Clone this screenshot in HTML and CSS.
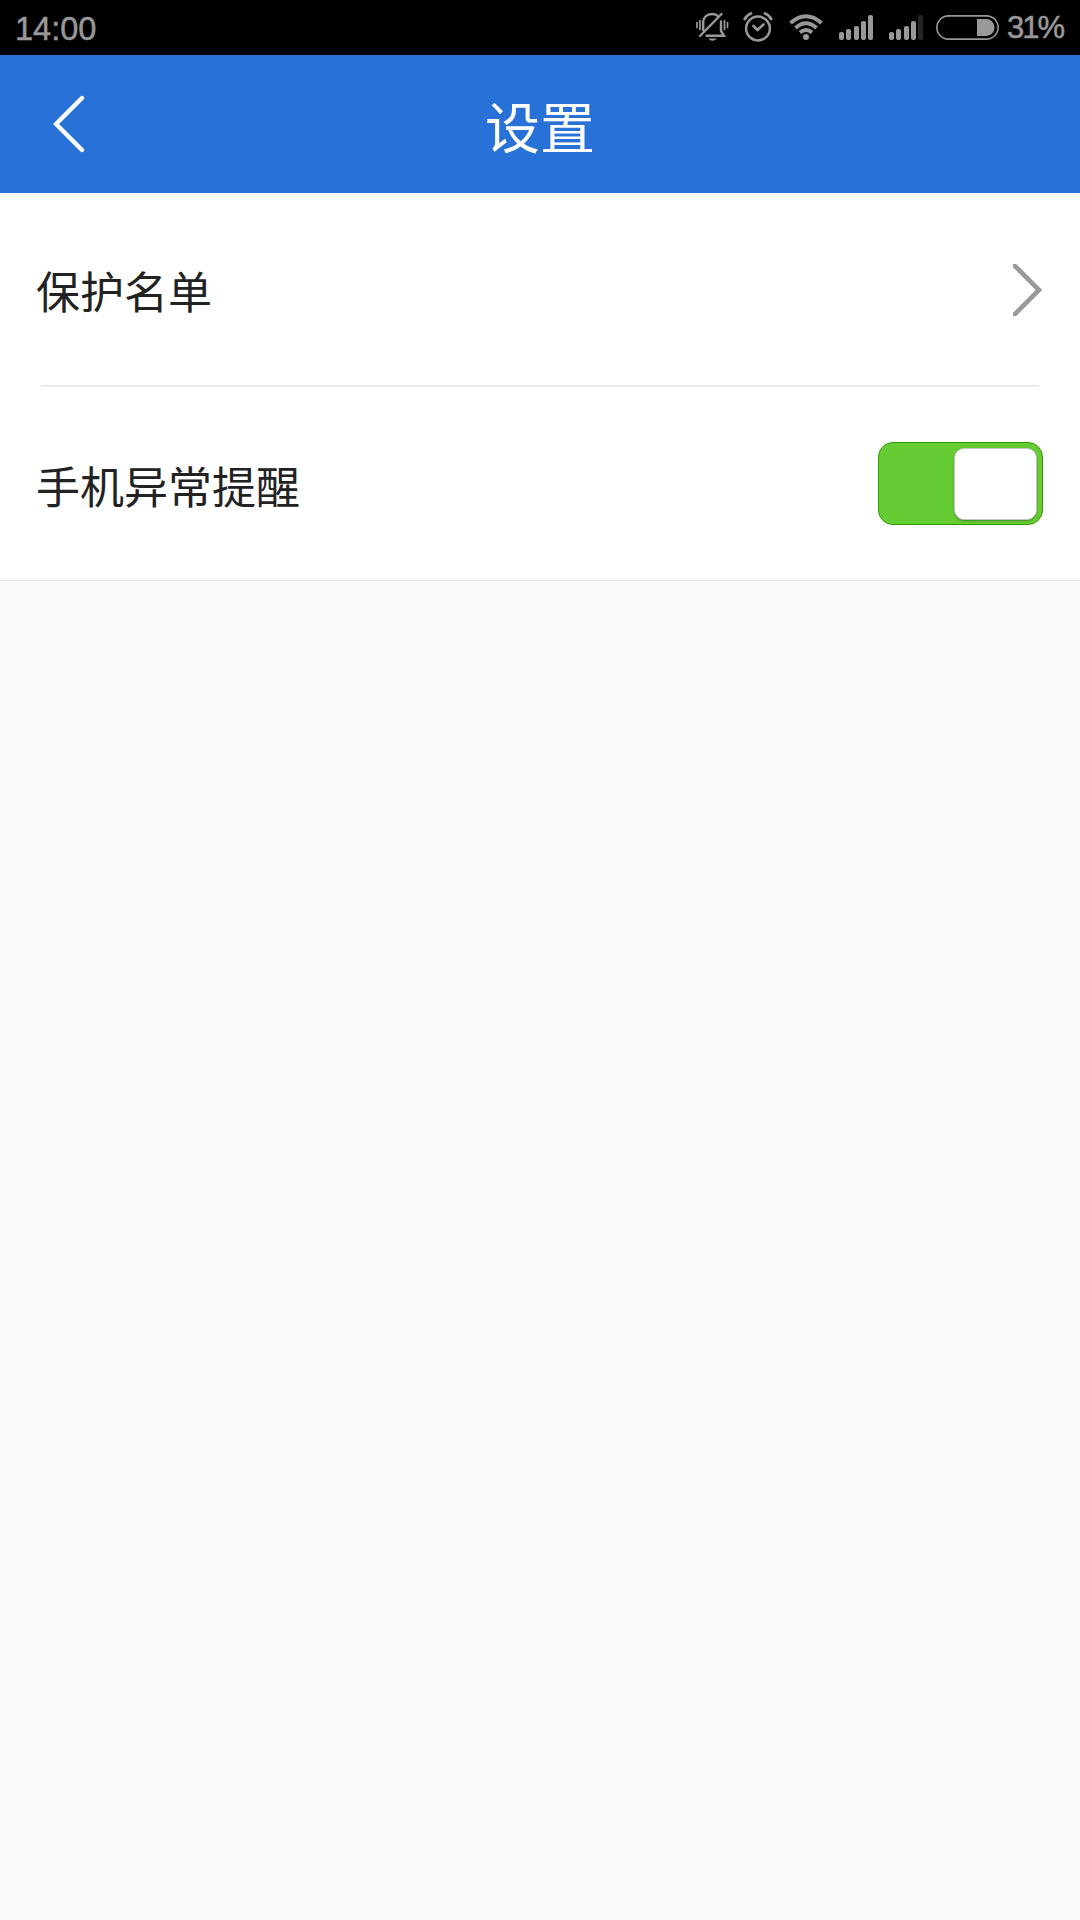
FILE: index.html
```
<!DOCTYPE html>
<html lang="zh-CN">
<head>
  <meta charset="UTF-8">
  <title>设置</title>
  <link rel="stylesheet" href="styles.css">
</head>
<body>
  <div class="statusbar">
    <span class="time">14:00</span>

    <div class="status-icons">
      <!-- muted bell -->
      <svg class="icon-bell" width="34" height="32" viewBox="0 0 34 32" fill="none" stroke="#999" stroke-width="2.400" stroke-linecap="round">
        <path d="M7.200 19V12C7.200 6 11 3 16 3C18 3 20 3.500 21.500 4.700"/>
        <path d="M25 10.500V20L28 24.800H10.500"/>
        <path d="M4 25L25.500 3"/>
        <path d="M1 11.500V16.500M4 9.500V18.500M28.500 9.500V18.500M31.500 11.500V16.500" stroke-width="1.700"/>
        <path d="M12 27.500H21Q16.500 32 12 27.500Z" fill="#999" stroke="none"/>
      </svg>
      <!-- alarm -->
      <svg class="icon-alarm" width="30" height="32" viewBox="0 0 30 32" fill="none" stroke="#999" stroke-linecap="round">
        <circle cx="15" cy="17.500" r="11.900" stroke-width="2.500"/>
        <path d="M10.500 15L14.500 19L20.500 13.500" stroke-width="2.600"/>
        <path d="M1.800 8Q4 4 8 2.500M22 2.500Q26 4 28.200 8" stroke-width="2.800"/>
      </svg>
      <!-- wifi -->
      <svg class="icon-wifi" width="34" height="28" viewBox="0 0 34 28" fill="none" stroke="#999" stroke-width="3.800">
        <path d="M1.500 9Q17 -4.500 32.500 9"/>
        <path d="M6.500 14Q17 4.700 27.500 14"/>
        <path d="M11 18.500Q17 13.500 23 18.500"/>
        <circle cx="17" cy="23" r="3" fill="#999" stroke="none"/>
      </svg>
      <div class="signal">
        <i class="bar bar1"></i><i class="bar bar2"></i><i class="bar bar3"></i><i class="bar bar4"></i><i class="bar bar5"></i>
      </div>
      <div class="signal">
        <i class="bar bar1"></i><i class="bar bar2"></i><i class="bar bar3"></i><i class="bar bar4"></i><i class="bar bar5 off"></i>
      </div>
      <!-- battery -->
      <svg class="icon-battery" width="63" height="25" viewBox="0 0 63 25">
        <rect x="0.900" y="0.900" width="61.200" height="23.200" rx="11.600" fill="none" stroke="#999" stroke-width="1.600"/>
        <path d="M41 4H50A8.500 8.500 0 0 1 50 21H41Z" fill="#999"/>
      </svg>
      <span class="percent">31%</span>
    </div>
  </div>

  <header class="header">
    <svg class="back" width="32" height="60" viewBox="0 0 32 60" fill="none" stroke="#fff" stroke-width="4.400" stroke-linecap="round">
      <path d="M29 4L3 30L29 56"/>
    </svg>
    <h1>设置</h1>
  </header>

  <div class="settings">
    <div class="row">
      <span class="label">保护名单</span>
      <svg class="arrow" width="30" height="52" viewBox="0 0 30 52" fill="none" stroke="#999" stroke-width="4.600">
        <path d="M0 0L26 26L0 52"/>
      </svg>
    </div>
    <div class="divider"></div>
    <div class="row">
      <span class="label">手机异常提醒</span>
      <div class="switch"><div class="knob"></div></div>
    </div>
  </div>
</body>
</html>
```

FILE: styles.css
```
body {
  margin: 0;
  min-height: 1920px;
  background: #fafafa;
  font-family: "Noto Sans CJK SC", sans-serif;
  color: #222;
}

.statusbar {
  display: flex;
  justify-content: space-between;
  height: 55px;
  padding: 0 16px 0 15px;
  box-sizing: border-box;
  background: #000;
  color: #999;
  font-family: "Liberation Sans", sans-serif;
  -webkit-text-stroke: 0.5px #999;
}

.time {
  font-size: 32.5px;
  line-height: 58px;
}

.status-icons {
  display: flex;
  align-items: flex-start;
}

.icon-bell {
  margin-top: 11px;
}

.icon-alarm {
  margin: 11px 0 0 13px;
}

.icon-wifi {
  margin: 14px 0 0 16px;
}

.signal {
  display: flex;
  align-items: flex-end;
  justify-content: space-between;
  width: 34px;
  height: 25px;
  margin: 15px 0 0 16px;
}

.bar {
  width: 5px;
  border-radius: 2px;
  background: #999;
}

.bar1 {
  height: 8px;
}

.bar2 {
  height: 11px;
}

.bar3 {
  height: 14px;
}

.bar4 {
  height: 19px;
}

.bar5 {
  height: 25px;
}

.off {
  background: #262626;
}

.icon-battery {
  margin: 15px 0 0 13px;
}

.percent {
  width: 57px;
  margin-left: 8px;
  font-size: 31px;
  line-height: 56px;
  letter-spacing: -2px;
}

.header {
  display: grid;
  grid-template-columns: 140px 1fr 140px;
  align-items: center;
  height: 138px;
  background: #2872d7;
  color: #fff;
}

.back {
  margin-left: 53px;
}

.header h1 {
  margin: 0;
  font-size: 55px;
  font-weight: 400;
  line-height: 80px;
  text-align: center;
}

.settings {
  background: #fff;
  border-bottom: 1px solid #e2e2e2;
}

.row {
  display: flex;
  justify-content: space-between;
  align-items: center;
  height: 192px;
  padding: 0 37px 0 36px;
}

.row:last-child {
  height: 193px;
}

.label {
  padding-top: 2px;
  font-size: 44px;
  font-weight: 400;
  line-height: 64px;
}

.arrow {
  margin: 2px 0 0 0;
}

.divider {
  height: 2px;
  margin: 0 41px;
  background: #ebebeb;
}

.switch {
  display: flex;
  justify-content: flex-end;
  width: 165px;
  height: 83px;
  padding: 5px;
  box-sizing: border-box;
  border: 1px solid #390;
  border-radius: 15px;
  background: #6c3;
}

.knob {
  width: 83px;
  height: 72px;
  box-sizing: border-box;
  border: 1px solid #c4c4c4;
  border-radius: 10px;
  background: #fff;
  box-shadow: 0 1px 2px rgba(0, 0, 0, 0.35);
}
```
